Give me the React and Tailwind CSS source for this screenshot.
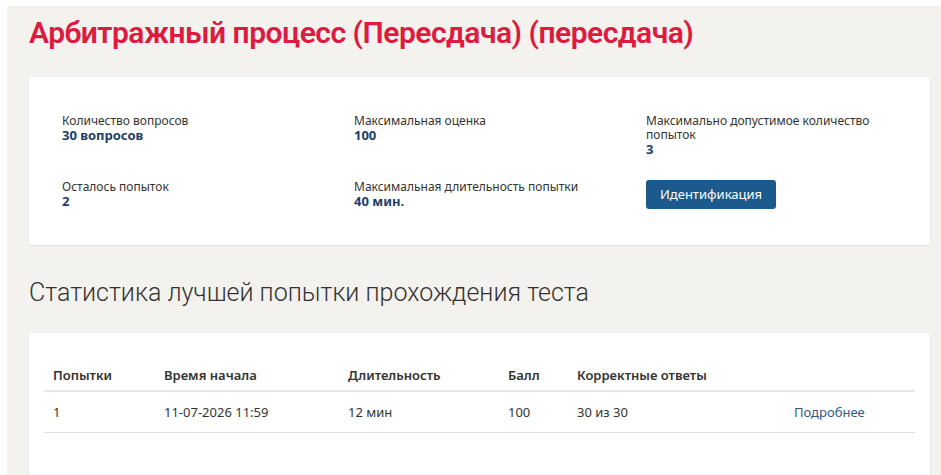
const info = [
  { label: 'Количество вопросов', value: '30 вопросов' },
  { label: 'Максимальная оценка', value: '100' },
  { label: 'Максимально допустимое количество попыток', value: '3' },
  { label: 'Осталось попыток', value: '2' },
  { label: 'Максимальная длительность попытки', value: '40 мин.' },
]

const attempts = [
  { n: 1, start: '11-07-2026 11:59', duration: '12 мин', score: 100, correct: '30 из 30' },
]

const InfoItem = ({ label, value }) => (
  <div className="pr-10">
    <div className="text-[12px] leading-[14px] text-[#333]">{label}</div>
    <div className="text-[13px] font-bold leading-[14px] text-[#1d3d6b]">{value}</div>
  </div>
)

export default function App() {
  return (
    <div className="min-h-screen bg-white pl-[7px] pt-[6px] font-['Noto_Sans',sans-serif]">
      <div className="min-h-screen bg-[#f3f2ef] pl-[22px] pr-[11px]">
        <h1 className="pt-[7px] font-['Roboto',sans-serif] text-[30px] font-semibold leading-[40px] tracking-[-0.5px] text-[#e0193f]">
          Арбитражный процесс (Пересдача) (пересдача)
        </h1>

        <section className="mt-[24px] rounded-[3px] bg-white pb-[36px] pl-[33px] pr-[20px] pt-[37px] shadow-[0_1px_2px_rgba(0,0,0,0.08)]">
          <div className="grid grid-cols-[292px_292px_1fr] gap-y-[24px]">
            {info.slice(0, 3).map((item) => (
              <InfoItem key={item.label} {...item} />
            ))}
            {info.slice(3).map((item) => (
              <InfoItem key={item.label} {...item} />
            ))}
            <div>
              <button className="h-[29px] rounded-[3px] bg-[#1c5a8e] px-[14px] text-[13px] text-white">
                Идентификация
              </button>
            </div>
          </div>
        </section>

        <h2 className="mt-[32px] font-['Roboto',sans-serif] text-[25px] font-light leading-[32px] text-[#333]">
          Статистика лучшей попытки прохождения теста
        </h2>

        <section className="mt-[24px] rounded-[3px] bg-white px-[15px] pb-[80px] pt-[27px] shadow-[0_1px_2px_rgba(0,0,0,0.08)]">
          <table className="w-full border-collapse text-left text-[13px] leading-[18px] text-[#333]">
            <thead>
              <tr className="border-b-2 border-[#e6e6e6]">
                <th className="w-[120px] py-[6px] pl-[9px] font-semibold">Попытки</th>
                <th className="w-[184px] py-[6px] font-semibold">Время начала</th>
                <th className="w-[160px] py-[6px] font-semibold">Длительность</th>
                <th className="w-[69px] py-[6px] font-semibold">Балл</th>
                <th className="w-[217px] py-[6px] font-semibold">Корректные ответы</th>
                <th className="py-[6px]"></th>
              </tr>
            </thead>
            <tbody>
              {attempts.map((a) => (
                <tr key={a.n} className="border-b border-[#e0e0e0]">
                  <td className="py-[11px] pl-[9px]">{a.n}</td>
                  <td className="py-[11px]">{a.start}</td>
                  <td className="py-[11px]">{a.duration}</td>
                  <td className="py-[11px]">{a.score}</td>
                  <td className="py-[11px]">{a.correct}</td>
                  <td className="py-[11px]">
                    <a href="#" className="text-[#2d5b8c]">Подробнее</a>
                  </td>
                </tr>
              ))}
            </tbody>
          </table>
        </section>
      </div>
    </div>
  )
}
